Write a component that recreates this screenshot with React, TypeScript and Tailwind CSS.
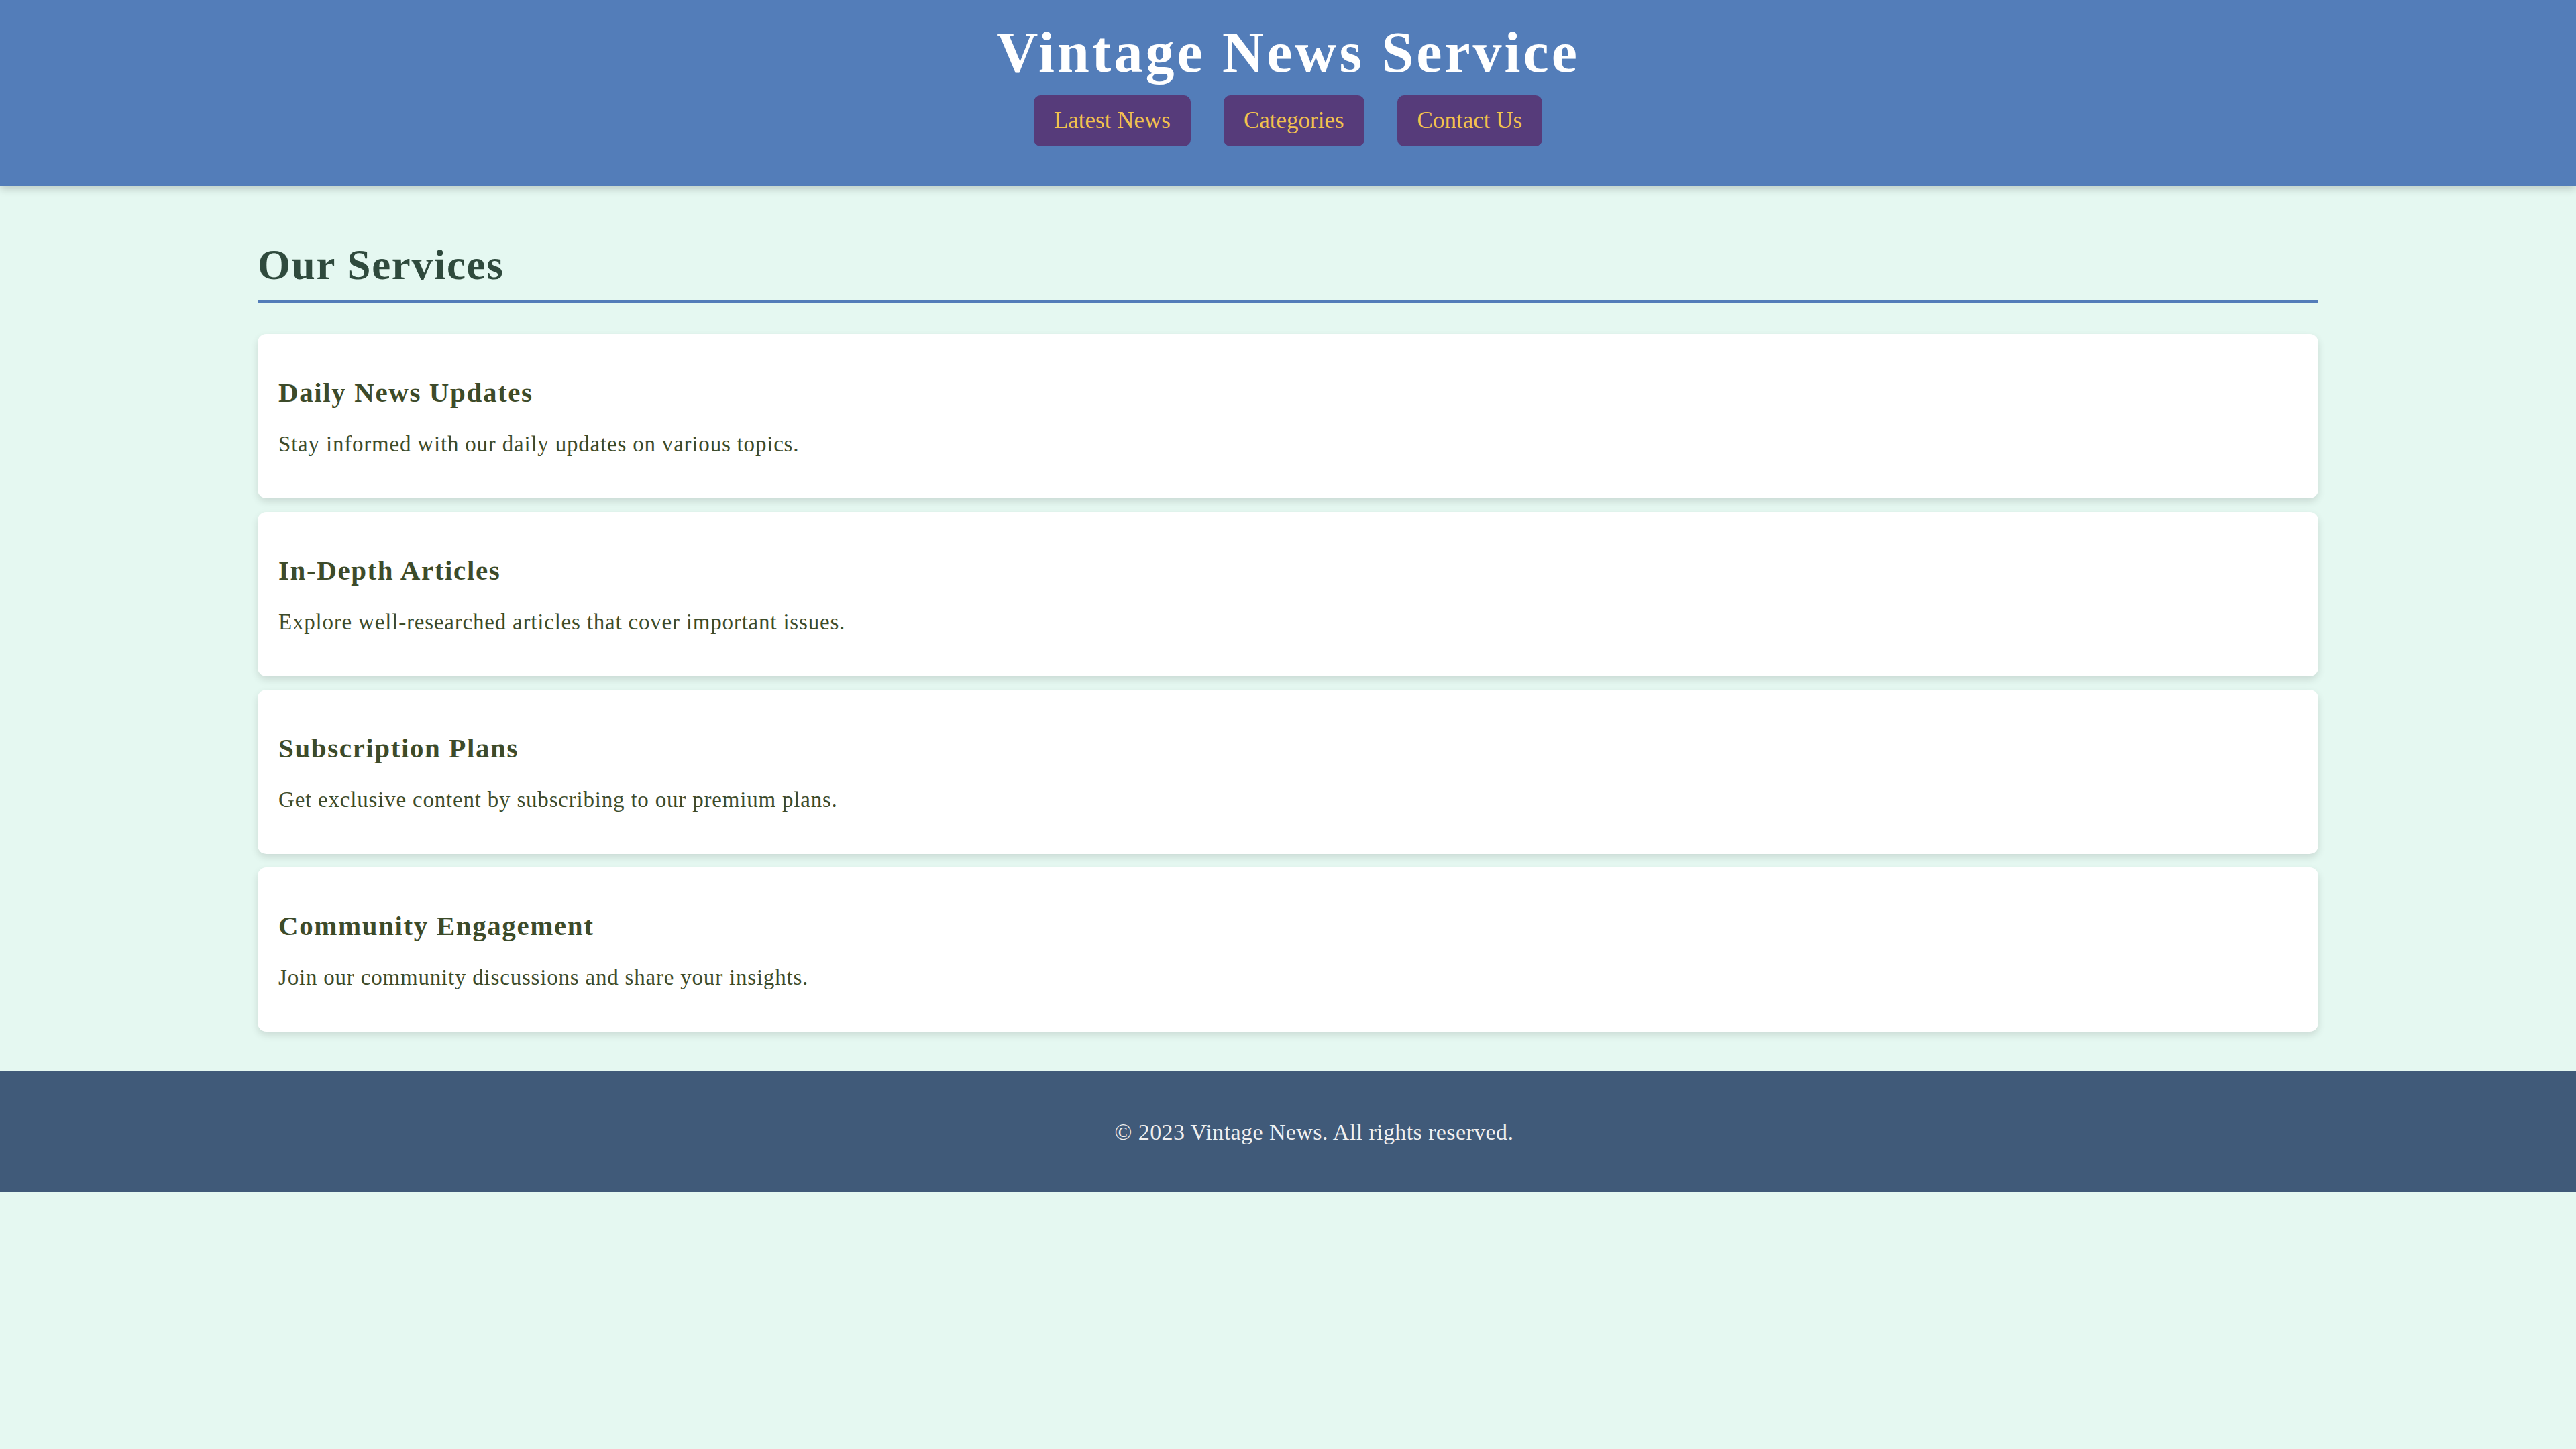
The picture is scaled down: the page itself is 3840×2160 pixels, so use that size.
const services = [
  {
    title: "Daily News Updates",
    text: "Stay informed with our daily updates on various topics.",
  },
  {
    title: "In-Depth Articles",
    text: "Explore well-researched articles that cover important issues.",
  },
  {
    title: "Subscription Plans",
    text: "Get exclusive content by subscribing to our premium plans.",
  },
  {
    title: "Community Engagement",
    text: "Join our community discussions and share your insights.",
  },
];

const links = ["Latest News", "Categories", "Contact Us"];

function ServiceCard({ title, text }: { title: string; text: string }) {
  return (
    <div className="bg-white rounded-[13px] shadow-[0_5px_12px_rgba(0,0,0,0.12)] px-[31px] pt-[67px] pb-[63px]">
      <h3 className="text-[41px] leading-[41px] font-bold tracking-[1.6px] text-[#3d4b2a]">{title}</h3>
      <p className="mt-[39px] text-[33px] leading-[35px] tracking-[0.8px] text-[#3d4b2a]">{text}</p>
    </div>
  );
}

export default function App() {
  return (
    <div className="min-h-screen bg-[#e5f8f1] font-['Liberation_Serif','Times_New_Roman',serif]">
      <header className="relative z-10 h-[277px] bg-[#537db9] shadow-[0_4px_12px_rgba(0,0,0,0.2)] flex flex-col items-center pt-[38px]">
        <h1 className="text-[86px] leading-[80px] font-bold text-white tracking-[4px]">
          Vintage News Service
        </h1>
        <nav className="mt-[24px] flex gap-[49px]">
          {links.map((l) => (
            <a
              key={l}
              href="#"
              className="h-[76px] px-[30px] flex items-center rounded-[10px] bg-[#563b7a] text-[#f2c14e] text-[35px]"
            >
              {l}
            </a>
          ))}
        </nav>
      </header>

      <main className="w-[80%] mx-auto pt-[88px]">
        <h2 className="text-[63px] leading-[60px] font-bold tracking-[1.7px] text-[#2f4a3d] pb-[22px] border-b-[4px] border-[#537db9]">
          Our Services
        </h2>
        <div className="mt-[47px] flex flex-col gap-[20px]">
          {services.map((s) => (
            <ServiceCard key={s.title} title={s.title} text={s.text} />
          ))}
        </div>
      </main>

      <footer className="mt-[59px] h-[180px] bg-[#405a79] flex items-center justify-center pl-[78px]">
        <p className="text-[34px] tracking-[0.4px] text-[#f0f0f0]">© 2023 Vintage News. All rights reserved.</p>
      </footer>
    </div>
  );
}
